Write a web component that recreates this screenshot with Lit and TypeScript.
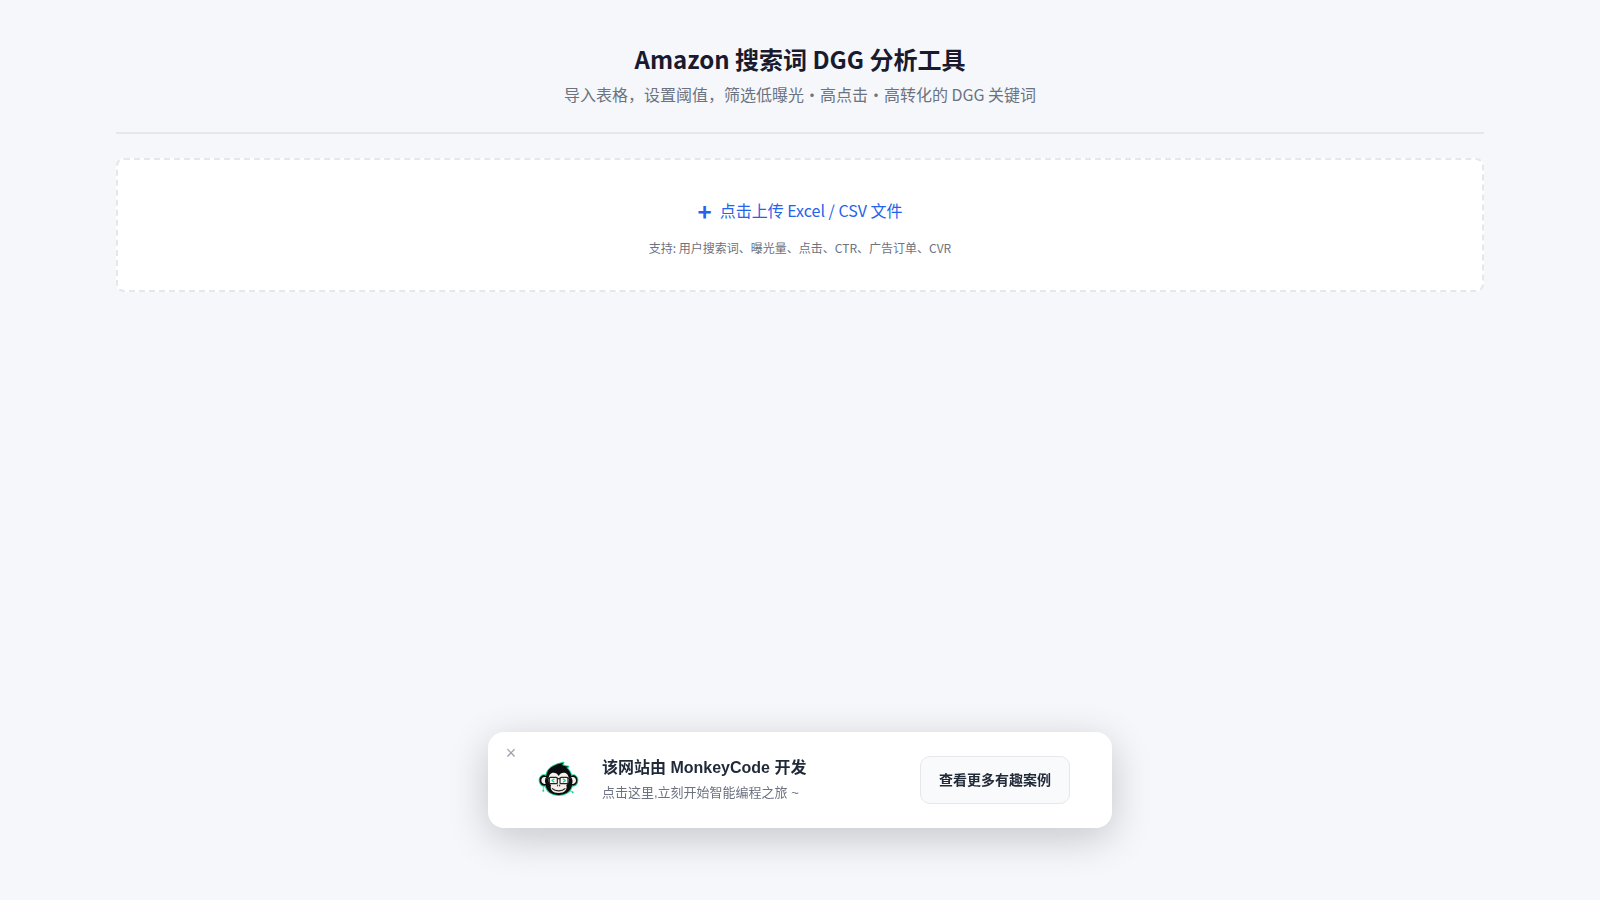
import { LitElement, html, css, svg } from 'lit';
import { customElement, state } from 'lit/decorators.js';

const headPath =
  'M88 20 C74 23 52 28 42 44 C39 50 37 56 37 60 C25 54 17 63 17 73 C17 84 26 92 35 88 C38 107 54 117 74 117 C94 117 110 107 114 88 C123 91 130 84 130 73 C130 63 122 54 112 60 C110 48 104 41 97 35 L103 32 L92 30 L84 27 Z';

const monkeyLogo = svg`
  <g stroke-linecap="round" stroke-linejoin="round">
    <path d=${headPath} fill="#0a0c10" stroke="#16d08b" stroke-width="6" />
    <path d=${headPath} fill="#0a0c10" />
    <path d="M37 64 C28 60 22 66 22 73 C22 81 28 86 35 83 C32 78 32 70 37 64 Z" fill="#f8efe9" />
    <path d="M111 64 C120 60 126 66 126 73 C126 81 120 86 114 83 C117 78 116 70 111 64 Z" fill="#f8efe9" />
    <path
      d="M74 60 C68 47 46 45 44 66 C43 78 46 84 51 87 C47 101 56 111 74 111 C92 111 101 101 97 87 C102 84 105 78 104 66 C102 45 80 47 74 60 Z"
      fill="#f8efe9"
    />
    <rect x="46" y="64" width="24" height="19" rx="3" fill="#f8f6f3" stroke="#22262b" stroke-width="3.5" />
    <rect x="78" y="64" width="24" height="19" rx="3" fill="#f8f6f3" stroke="#22262b" stroke-width="3.5" />
    <path d="M70 68 H78 M36 67 H46 M102 67 H112" fill="none" stroke="#22262b" stroke-width="3.5" />
    <path d="M60 69 L54 73.5 L60 78 M88 69 L94 73.5 L88 78" fill="none" stroke="#16d08b" stroke-width="3.5" />
    <path d="M71 87 V90 M77 87 V90" fill="none" stroke="#22262b" stroke-width="3" />
    <path d="M55 98 C63 107 85 107 93 98" fill="none" stroke="#22262b" stroke-width="3.5" />
    <path d="M28 90 V102 M106 106 H114" fill="none" stroke="#16d08b" stroke-width="2" />
    <circle cx="28" cy="104" r="3" fill="#16d08b" />
    <circle cx="116" cy="109" r="3" fill="#16d08b" />
  </g>
`;

@customElement('promo-banner')
export class PromoBanner extends LitElement {
  static styles = css`
    :host {
      position: fixed;
      left: 50%;
      bottom: 72px;
      transform: translateX(-50%);
      font-family: 'Liberation Sans', 'Noto Sans CJK SC', sans-serif;
    }

    .banner {
      position: relative;
      display: flex;
      align-items: center;
      box-sizing: border-box;
      width: 624px;
      height: 96px;
      padding: 0 42px 0 46px;
      background: #fff;
      border-radius: 16px;
      box-shadow: 0 10px 40px rgba(0, 0, 0, 0.2);
    }

    .close {
      position: absolute;
      top: 11px;
      left: 13px;
      width: 20px;
      height: 20px;
      padding: 0;
      border: none;
      background: none;
      color: #9ca3af;
      font-family: inherit;
      font-size: 18px;
      line-height: 20px;
      cursor: pointer;
    }

    .logo {
      width: 48px;
      height: 48px;
      margin-right: 20px;
    }

    .text {
      flex: 1;
    }

    .title {
      font-size: 16px;
      font-weight: 600;
      line-height: 24px;
      color: #1f2937;
    }

    .desc {
      margin-top: 3px;
      padding-bottom: 1px;
      font-size: 13px;
      line-height: 20px;
      color: #6b7280;
    }

    .action {
      box-sizing: border-box;
      height: 48px;
      padding: 0 18px 2px;
      border: 1px solid #e5e7eb;
      border-radius: 10px;
      background: #f9fafb;
      color: #1f2937;
      font-family: inherit;
      font-size: 14px;
      font-weight: 600;
      cursor: pointer;
    }
  `;

  private _close() {
    this.dispatchEvent(new CustomEvent('close'));
  }

  render() {
    return html`
      <div class="banner">
        <button class="close" @click=${this._close}>×</button>
        <svg class="logo" viewBox="0 0 144 144">${monkeyLogo}</svg>
        <div class="text">
          <div class="title">该网站由 MonkeyCode 开发</div>
          <div class="desc">点击这里,立刻开始智能编程之旅 ~</div>
        </div>
        <button class="action">查看更多有趣案例</button>
      </div>
    `;
  }
}

@customElement('app-root')
export class AppRoot extends LitElement {
  @state() private _bannerOpen = true;

  static styles = css`
    :host {
      display: block;
      min-height: 100vh;
      background: #f5f7fb;
      font-family: 'Noto Sans CJK SC', sans-serif;
      line-height: 1.5;
    }

    .container {
      box-sizing: border-box;
      max-width: 1400px;
      margin: 0 auto;
      padding: 24px 16px;
    }

    /* ===== Header ===== */
    .header {
      padding: 16px 0 24px;
      margin-bottom: 24px;
      border-bottom: 2px solid #e5e7eb;
      text-align: center;
    }

    h1 {
      margin: 0 0 4px;
      font-size: 24px;
      font-weight: 700;
      line-height: 38px;
      color: #1a1a2e;
    }

    .subtitle {
      margin: 0;
      padding-bottom: 2px;
      font-size: 16px;
      line-height: 24px;
      color: #6b7280;
    }

    /* ===== Upload ===== */
    .upload {
      display: flex;
      flex-direction: column;
      align-items: center;
      box-sizing: border-box;
      height: 134px;
      padding: 32px;
      border: 2px dashed #e5e7eb;
      border-radius: 8px;
      background: #fff;
    }

    .upload-label {
      display: inline-flex;
      align-items: center;
      gap: 8px;
      height: 36px;
      font-size: 16px;
      color: #2563eb;
      cursor: pointer;
    }

    .plus {
      padding-top: 2px;
      font-size: 24px;
      font-weight: 700;
    }

    .hint {
      margin: 11px 0 0;
      font-size: 12px;
      line-height: 18px;
      color: #6b7280;
    }
  `;

  render() {
    return html`
      <div class="container">
        <header class="header">
          <h1>Amazon 搜索词 DGG 分析工具</h1>
          <p class="subtitle">导入表格，设置阈值，筛选低曝光・高点击・高转化的 DGG 关键词</p>
        </header>
        <section class="upload">
          <label class="upload-label"><span class="plus">+</span><span>点击上传 Excel / CSV 文件</span></label>
          <p class="hint">支持: 用户搜索词、曝光量、点击、CTR、广告订单、CVR</p>
        </section>
      </div>
      ${this._bannerOpen
        ? html`<promo-banner @close=${() => (this._bannerOpen = false)}></promo-banner>`
        : ''}
    `;
  }
}

declare global {
  interface HTMLElementTagNameMap {
    'promo-banner': PromoBanner;
    'app-root': AppRoot;
  }
}
